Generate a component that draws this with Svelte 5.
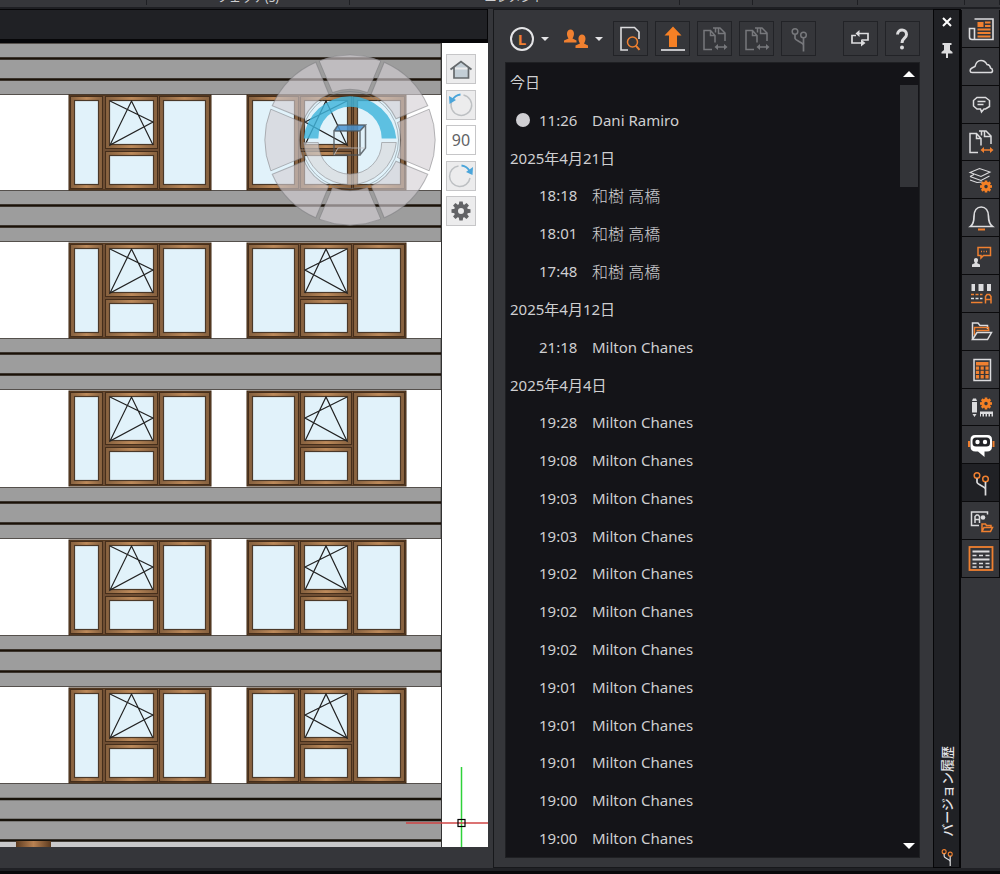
<script>
    const menuCells = ["", "フェッチ(S)", "エレメント", "", "", "", ""];

    const bands = [43, 190, 338, 487, 635];
    const windowTops = [94, 242, 390, 539, 687];
    const segments = [0, 45, 90, 135, 180, 225, 270, 315];

    const toolGroups = [
        [
            { icon: "search", label: "プレビュー" },
            { icon: "upload", label: "アップロード" },
            { icon: "files", label: "比較", disabled: true },
            { icon: "files", label: "前と比較", disabled: true },
            { icon: "branch", label: "ブランチ", disabled: true }
        ], [
            { icon: "swap", label: "更新" },
            { icon: "help", label: "ヘルプ" }
        ]
    ];

    const railItems = [
        "news", "cloud", "chat", "files", "layers", "bell", "comment", "text",
        "folder", "calc", "tools", "robot", "branch", "attach", "table"
    ];
    let activeRail = "branch";

    const versions = [
        { date: "今日" },
        { time: "11:26", name: "Dani Ramiro", current: true },
        { date: "2025年4月21日" },
        { time: "18:18", name: "和樹 高橋", ja: true },
        { time: "18:01", name: "和樹 高橋", ja: true },
        { time: "17:48", name: "和樹 高橋", ja: true },
        { date: "2025年4月12日" },
        { time: "21:18", name: "Milton Chanes" },
        { date: "2025年4月4日" },
        ...[
            "19:28", "19:08", "19:03", "19:03", "19:02", "19:02", "19:02",
            "19:01", "19:01", "19:01", "19:00", "19:00"
        ].map((time) => ({ time, name: "Milton Chanes" }))
    ];
</script>

{#snippet gear(x, y, r)}
    <g transform="translate({x} {y})" stroke="none">
        <circle r={r - 1.8} fill="none" stroke="#f58025" stroke-width="3" />
        {#each segments as angle}
            <rect x="-1.3" y={-r - 1} width="2.6" height="2.6" fill="#f58025" transform="rotate({angle})" />
        {/each}
    </g>
{/snippet}

{#snippet icon(name, muted)}
    <svg class="icon" viewBox="0 0 28 28" fill="none" stroke={muted ? "#77787c" : "#dcdcde"} stroke-width="1.5" aria-hidden="true">
        {#if name === "search"}
            <path d="M11 25H4V2.5h13.5l4.5 4.500V14" stroke-width="1.6" />
            <g stroke="#f08030"><circle cx="15.500" cy="17" r="5" /><path d="M19 20.800l3.500 4" stroke-width="2" /></g>
        {:else if name === "upload"}
            <path d="M14 1.500l8.500 9H18V22h-8V10.500H5.500z" fill="#f58025" stroke="none" />
            <path d="M2 25h24" stroke-width="1.700" />
        {:else if name === "files"}
            <path d="M11 24.500H3V5.500h6.500l4.500 5v7M9.500 5.500v5H14M12 3h7l5 5v8M17.500 3v5.500H24M14.500 3.500v4" />
            <g stroke={muted ? "#77787c" : "#f08030"} fill={muted ? "#77787c" : "#f08030"}>
                <path d="M16 22h8" /><path d="M13.500 22l3.500-3v6zM26.500 22l-3.500-3v6z" stroke="none" />
            </g>
        {:else if name === "branch"}
            <g stroke={muted ? "#77787c" : "#f08030"}><circle cx="10" cy="6.500" r="2.800" /><circle cx="18.500" cy="10" r="2.800" /></g>
            <path d="M10 9.500v3.500c0 3 8.500 4 8.500 7.500M18.500 13v13.500" stroke-width="1.700" />
        {:else if name === "swap"}
            <path d="M10 8.500h11v6.500h-6.500M9 10.500H5V18h11" stroke-width="1.700" />
            <path d="M12.500 5v7L8.500 8.500zM14 14.500v7l4.500-3.500z" fill="#dcdcde" stroke="none" />
        {:else if name === "help"}
            <path d="M8.500 9.500c.3-6 9-6 9 0 0 4-4.500 3.500-4.500 8.500" stroke-width="3" />
            <circle cx="13" cy="22.500" r="2" fill="#dcdcde" stroke="none" />
        {:else if name === "news"}
            <path d="M7.500 5H26v20.500H5q-2.500 0-2.500-2.500v-8.500h5V25" stroke-width="1.600" />
            <rect x="10.500" y="8" width="6" height="5" fill="#f08030" stroke="none" />
            <path d="M18 8.500h5.500M18 12h5.500M10.500 15.500h13M10.500 19h13M10.500 22.500h13" stroke="#f08030" stroke-width="1.800" />
        {:else if name === "cloud"}
            <path d="M5 20.500c-2 0-3-3 0-4.500l3-1.500C9 10 11 8.500 14 8.500c3.500 0 5 2 6 4 2.500.2 3.200 1 3.500 3.500 3 1 2.500 4.500 0 4.500z" />
        {:else if name === "chat"}
            <path d="M10 7.500h8.500l4 3v6l-4 2.500H17l-2.500 3-1-3H10l-3.500-3v-5.500zM10.500 11.500h8M10.500 14.500h6" />
        {:else if name === "layers"}
            <path d="M3 6.500l9.500-4L23 6l-9 4.500zM3 10.500l11 4L22.500 10M3 10.500l4-2M3 14l7 2.500 5-.5" stroke-width="1.100" />
            {@render gear(19, 20.5, 5)}
        {:else if name === "bell"}
            <path d="M3.500 22.500c2.500-2 3.500-4 3.500-10C7 6.500 10 3 14.200 3s7.300 3.500 7.300 9.500c0 6 1.500 8 4 10z" stroke-width="1.700" />
            <path d="M11 25.500h7" stroke="#f08030" stroke-width="2" />
        {:else if name === "comment"}
            <path d="M11 5.500h12.500v8h-7L14 16v-2.500h-3z" stroke="#f08030" />
            <path d="M14 9.500h7" stroke="#f08030" stroke-dasharray="1 1.500" />
            <path d="M5 25v-2.500l3-1.500c-1.500-2-1.500-5 1-5s2.500 3 1 5l3 1.500V25z" fill="#dcdcde" stroke="none" />
        {:else if name === "text"}
            <path d="M4.500 5h3.500v7H4.500zM11.500 5h5v7h-5zM20 5h4v7h-4z" fill="#dcdcde" stroke="none" />
            <path d="M4 15.500h11.500" stroke="#f08030" stroke-dasharray="3 1.500" />
            <path d="M4 19.500h11.500" stroke-dasharray="3 1.500" />
            <path d="M4 23.500h11.500M18.500 24.500v-7l1.500-2h2.500l1.500 2v7M18.500 20.500H24" stroke="#f08030" />
        {:else if name === "folder"}
            <path d="M5.500 22.500V6h5.500l2 2.500h7.500V12" />
            <path d="M7.500 18v-7.500h14v3M9.500 13.500h13" stroke="#f08030" />
            <path d="M5.500 22.500l4.500-7h14.500l-4 7z" />
        {:else if name === "calc"}
            <rect x="7" y="4.500" width="16.500" height="21" />
            <path d="M9 7h12.500v3.500H9z" fill="#f08030" stroke="none" />
            <path d="M10.500 11.500v12.500M15.200 11.500v12.500M20 11.500v12.500" stroke="#f08030" stroke-width="3.200" stroke-dasharray="3.300 1" />
        {:else if name === "tools"}
            <path d="M5 8l1-2.500h3L10 8zM5 9h5v10.500H5zM5.500 21h4l-2 3z" fill="#dcdcde" stroke="none" />
            {@render gear(19, 10.5, 5)}
            <path d="M13 18.500h13v5h-1.500v-2.500H23v2.500h-1.500v-2.500H20v2.500h-1.500v-2.500H17v2.500h-1.500v-2.500H14v2.500h-1z" fill="#dcdcde" stroke="none" />
        {:else if name === "robot"}
            <path d="M2 10v6M26.500 10v6" stroke="#f08030" stroke-width="2" />
            <path d="M8 4h12.500q4.500 0 4.500 4.500v7q0 5-5 5h-2.500V26L11 20.500H8.500q-5 0-5-5v-7Q3.500 4 8 4z" fill="#fff" stroke="none" />
            <rect x="5.500" y="6.500" width="17.500" height="9" rx="3.500" fill="#222327" stroke="none" />
            <circle cx="10.500" cy="11" r="2.200" fill="#fff" stroke="none" /><circle cx="18" cy="11" r="2.200" fill="#fff" stroke="none" />
        {:else if name === "attach"}
            <path d="M12 18.500H4.500V5H20.500v2.500M8 16V9.500L9.500 8H11l1.500 1.500V16M8 12.500h4.500" />
            <circle cx="16" cy="10.500" r="2.300" fill="#dcdcde" stroke="none" />
            <path d="M15 24.500V17h3.500l1 1.500H24v2M15 24.500l2-4h8.500l-2 4z" stroke="#f08030" />
        {:else if name === "table"}
            <rect x="2.500" y="3" width="23" height="23" stroke="#f08030" stroke-width="1.800" />
            <path d="M5.500 7.500h17M5.500 15.500h17" stroke-width="2.200" />
            <path d="M5.500 11.500h17M5.500 19.500h17M5.500 23h17" stroke-dasharray="4 2.500" />
        {/if}
    </svg>
{/snippet}

{#snippet sash(x, y, w, h)}
    <rect {x} {y} width={w} height={h} fill="url(#wood)" stroke="#452e1b" />
    <rect x={x + 4} y={y + 4} width={w - 8} height={h - 8} fill="#e1f2fa" stroke="#4a3828" stroke-width="1.2" />
{/snippet}

<div class="app">
    <header class="menubar">
        {#each menuCells as cell}
            <span>{cell}</span>
        {/each}
    </header>

    <div class="workspace">
        <main>
            <div class="tabs"></div>
            <div class="canvas">
                <svg class="drawing" viewBox="0 43 488 804" preserveAspectRatio="xMaxYMin slice" role="img" aria-label="立面図">
                    <defs>
                        <linearGradient id="wood" x1="0" x2="1">
                            <stop offset="0" stop-color="#85603e" />
                            <stop offset=".5" stop-color="#bd8a5a" />
                            <stop offset="1" stop-color="#85603e" />
                        </linearGradient>
                        <linearGradient id="post" x1="0" x2="1">
                            <stop offset="0" stop-color="#5c3b20" />
                            <stop offset=".5" stop-color="#b98252" />
                            <stop offset="1" stop-color="#5c3b20" />
                        </linearGradient>
                    </defs>
                    <rect y="43" width="488" height="804" fill="#fff" />
                    {#each bands as y}
                        <rect x="-2" y={y + 0.5} width="443" height="51" fill="#9d9d9d" stroke="#55504c" />
                        <path d="M0 {y + 15.5}h441M0 {y + 36.5}h441" stroke="#1b1208" stroke-width="2.4" />
                    {/each}
                    <rect y="783" width="441" height="58" fill="#9d9d9d" />
                    <rect y="841" width="441" height="6" fill="#c9c9cb" />
                    <path d="M0 783.5h441" stroke="#55504c" />
                    <path d="M0 799h441M0 820h441M0 840.500h441" stroke="#17120a" stroke-width="2.4" />
                    <rect x="16" y="841" width="35" height="6" fill="url(#post)" />
                    <path d="M441.500 43v804" stroke="#333" />

                    {#each windowTops as y}
                        <g transform="translate(0 {y})">
                            <rect x="69" y="1" width="142" height="95" fill="#6f4e33" stroke="#38230f" />
                            {@render sash(70.5, 2.5, 32, 92)}
                            {@render sash(105.5, 2.5, 52, 52)}
                            {@render sash(105.5, 57.5, 52, 37)}
                            {@render sash(159.5, 2.5, 50, 92)}
                            <path d="M110 7l43 21-43 23 21.500-44L153 51" fill="none" stroke="#222" stroke-width="1.200" />

                            <rect x="247" y="1" width="159" height="95" fill="#6f4e33" stroke="#38230f" />
                            {@render sash(248.5, 2.5, 50, 92)}
                            {@render sash(300.5, 2.5, 51, 52)}
                            {@render sash(300.5, 57.5, 51, 37)}
                            {@render sash(353.5, 2.5, 51, 92)}
                            <path d="M347 7l-42 21 42 23-21-44-21 44" fill="none" stroke="#222" stroke-width="1.200" />
                        </g>
                    {/each}

                    <!-- view wheel -->
                    <g transform="translate(350 140)">
                        {#each segments as angle}
                            <path d="M-30.800-79.200A85 85 0 0 1 30.800-79.200L17.500-47.500A50.600 50.600 0 0 0-17.500-47.500z" fill="#d3ced3" fill-opacity=".62" stroke="#77777b" stroke-opacity=".5" transform="rotate({angle})" />
                        {/each}
                        <circle r="48.500" fill="none" stroke="#6b7880" stroke-opacity=".5" stroke-width="1" />
                        <path d="M-46.300-1.500a46.500 46.500 0 0 1 92.600 0h-14.600a31.700 31.700 0 0 0-63.400 0z" fill="#3fb5dc" fill-opacity=".82" />
                        <path d="M-46.300 2.500a46.500 46.500 0 0 0 92.600 0h-14.600a31.700 31.700 0 0 1-63.400 0z" fill="#d8d8dc" fill-opacity=".65" stroke="#8a8a8e" stroke-opacity=".6" />
                        <path d="M-16-9l4-6h27.500l-5.500 6z" fill="#4a93d0" fill-opacity=".85" />
                        <path d="M-16-9h26v24h-26zM-16-9l4-6h27.500l-5.500 6M15.500-15v23L10 15" fill="none" stroke="#4c5358" stroke-opacity=".8" stroke-width="1.500" />
                        <path d="M-12 8h27M-12 8l-4 7" fill="none" stroke="#c0c0c4" stroke-opacity=".8" />
                    </g>

                    <path d="M461.500 767v80" stroke="#2fd23a" stroke-width="1.500" />
                    <path d="M406 823h82" stroke="#cf4545" stroke-width="1.500" />
                    <rect x="458" y="819.500" width="7" height="7" fill="none" stroke="#000" stroke-width="1.200" />
                </svg>

                <div class="view-tools">
                    <button aria-label="ホーム">
                        <svg viewBox="0 0 28 28" aria-hidden="true"><path d="M3.500 14.500L14 6.500l10.500 8M7 12.500V23h14.500V12.500" fill="#c3ced6" stroke="#65696c" stroke-width="1.700" /></svg>
                    </button>
                    <button aria-label="左に回転">
                        <svg viewBox="0 0 28 28" aria-hidden="true"><path d="M16.500 4A10.300 10.300 0 1 1 4.500 11" fill="none" stroke="#bdc0c3" stroke-width="1.500" /><path d="M13.500 3.500C10 4 7 6 5.500 9" fill="none" stroke="#4aa5da" stroke-width="1.800" /><path d="M2 5l.5 8 6.500-4z" fill="#4aa5da" /></svg>
                    </button>
                    <button class="angle" aria-label="回転角度 90">90</button>
                    <button aria-label="右に回転">
                        <svg viewBox="0 0 28 28" aria-hidden="true"><path d="M11.500 4A10.300 10.300 0 1 0 23 16" fill="none" stroke="#bdc0c3" stroke-width="1.500" /><path d="M14.500 3.500C18 4 21 6 22.500 9" fill="none" stroke="#4aa5da" stroke-width="1.800" /><path d="M26 5l-.5 8-6.500-3z" fill="#4aa5da" /></svg>
                    </button>
                    <button aria-label="設定">
                        <svg viewBox="-14 -14 28 28" aria-hidden="true">
                            <circle r="5" fill="none" stroke="#626366" stroke-width="4" />
                            {#each segments as angle}
                                <path d="M-2.200-6l.5-3.500h3.400l.5 3.500z" fill="#626366" transform="rotate({angle})" />
                            {/each}
                        </svg>
                    </button>
                </div>
            </div>
            <div class="canvas-foot"></div>
        </main>

        <section class="panel" aria-label="バージョン履歴">
            <div class="toolbar">
                <button class="menu" aria-label="ユーザー L">
                    <span class="avatar">L</span><span class="caret"></span>
                </button>
                <button class="menu" aria-label="共有">
                    <svg class="people" viewBox="0 0 24 24" fill="#f08030" aria-hidden="true">
                        <path d="M0 15.500v-2l4.500-2C2 8 2.500 2.500 6.500 2.500s4.500 5.500 2 9l4 2v2z" />
                        <path d="M11.500 21v-2.500l4.500-2c-2.500-3.500-2-9 2-9s4.500 5.500 2 9l4 2V21z" />
                    </svg>
                    <span class="caret"></span>
                </button>
                {#each toolGroups as group}
                    <div class="group">
                        {#each group as tool}
                            <button class="tool" disabled={tool.disabled} aria-label={tool.label}>
                                {@render icon(tool.icon, tool.disabled)}
                            </button>
                        {/each}
                    </div>
                {/each}
            </div>

            <div class="history">
                <ul>
                    {#each versions as version}
                        {#if version.date}
                            <li class="date">{version.date}</li>
                        {:else}
                            <li class="entry">
                                <span class:dot={version.current}></span>
                                <time>{version.time}</time>
                                <span class:ja={version.ja}>{version.name}</span>
                            </li>
                        {/if}
                    {/each}
                </ul>
                <div class="scroll">
                    <button class="up" aria-label="上へ"></button>
                    <div class="track"><div class="thumb"></div></div>
                    <button class="down" aria-label="下へ"></button>
                </div>
            </div>
        </section>

        <aside class="strip">
            <button aria-label="閉じる">
                <svg viewBox="0 0 18 18" aria-hidden="true"><path d="M5 5l8 8M13 5l-8 8" stroke="#fff" stroke-width="2" /></svg>
            </button>
            <button aria-label="ピン留め">
                <svg viewBox="0 0 18 18" aria-hidden="true"><path d="M4.500 2h9v2H12v5l2.500 2v1.500h-4.500V17H8v-4.500H3.500V11L6 9V4H4.500z" fill="#dcdcde" /></svg>
            </button>
            <h2>バージョン履歴</h2>
            {@render icon("branch", false)}
        </aside>

        <nav class="rail">
            <div class="rail-items">
                {#each railItems as item}
                    <button class:active={activeRail === item} aria-label={item} on:click={() => activeRail = item}>
                        {@render icon(item, false)}
                    </button>
                {/each}
            </div>
        </nav>
    </div>
    <footer></footer>
</div>

<style>
    :global(body) {
        background: #35363a;
    }

    button {
        padding: 0;
        border: none;
        background: none;
        color: inherit;
        font: inherit;
        cursor: pointer;
    }

    .app {
        display: flex;
        flex-direction: column;
        height: 100vh;
        color: #cfcfd1;
        background: #35363a;
        font-family: "Noto Sans", "Noto Sans CJK JP", sans-serif;
        font-size: 15px;
    }

    .menubar {
        display: grid;
        grid-template-columns: 147fr 203fr 330fr 73fr 105fr 107fr 35fr;
        height: 7px;
        overflow: hidden;
        border-bottom: 2px solid #1e1f23;
    }

    .menubar span {
        display: flex;
        align-items: flex-end;
        justify-content: center;
        height: 5px;
        border-right: 1px solid #1e1f23;
        font-size: 12px;
        line-height: 14px;
        white-space: nowrap;
    }

    .workspace {
        flex: 1;
        min-height: 0;
        display: grid;
        grid-template-columns: 1fr 440px 28px 39px;
        grid-template-rows: minmax(0, 1fr);
    }

    main {
        display: flex;
        flex-direction: column;
        min-width: 0;
        padding-right: 5px;
    }

    .tabs {
        height: 29px;
        background: #202125;
        border: 1px solid #060608;
        border-left: none;
        border-bottom-width: 4px;
    }

    .canvas {
        flex: 1;
        min-height: 0;
        position: relative;
    }

    .drawing {
        display: block;
        width: 100%;
        height: 100%;
    }

    .canvas-foot {
        height: 21px;
    }

    .view-tools {
        position: absolute;
        top: 11px;
        right: 12px;
        height: 172px;
        display: flex;
        flex-direction: column;
        justify-content: space-between;
    }

    .view-tools button {
        width: 30px;
        height: 30px;
        border: 1px solid #c6c6c8;
        background: #ececed;
    }

    .view-tools svg {
        display: block;
        width: 28px;
        height: 28px;
    }

    .view-tools .angle {
        background: #fff;
        color: #626366;
        font-size: 16px;
    }

    .panel {
        display: flex;
        flex-direction: column;
        gap: 6px;
        padding: 11px 13px 9px 11px;
        border: 1px solid #17181b;
        border-right: none;
    }

    .toolbar, .group {
        display: flex;
        align-items: center;
        gap: 7px;
    }

    .group:last-child {
        margin-left: auto;
    }

    .menu {
        width: 47px;
        height: 35px;
        display: flex;
        align-items: center;
        gap: 7px;
        padding-left: 5px;
    }

    .avatar {
        box-sizing: border-box;
        width: 24px;
        height: 24px;
        border: 2px solid #e4e4e6;
        border-radius: 50%;
        color: #f08030;
        font-size: 15px;
        font-weight: 700;
        line-height: 20px;
    }

    .people {
        width: 24px;
        height: 24px;
    }

    .caret {
        border: 4px solid transparent;
        border-top-color: #e4e4e6;
        border-bottom: none;
    }

    .tool {
        width: 35px;
        height: 35px;
        display: grid;
        place-items: center;
        border: 1px solid #222327;
    }

    .icon {
        display: block;
        width: 28px;
        height: 28px;
    }

    .history {
        flex: 1;
        min-height: 0;
        display: flex;
        background: #141418;
        border: 1px solid #1f2023;
    }

    ul {
        flex: 1;
        min-height: 0;
        display: grid;
        grid-auto-rows: minmax(0, 1fr);
        margin: 0;
        padding: 0;
        list-style: none;
    }

    li {
        display: flex;
        align-items: center;
        white-space: nowrap;
    }

    .date {
        padding-left: 4px;
    }

    .entry {
        display: grid;
        grid-template-columns: 33px 53px 1fr;
    }

    .dot {
        width: 14px;
        height: 14px;
        margin-left: 10px;
        border-radius: 50%;
        background: #d0cfd3;
    }

    .ja {
        font-size: 16px;
        font-weight: 300;
    }

    .scroll {
        width: 18px;
        margin-right: 1px;
        display: flex;
        flex-direction: column;
    }

    .scroll button {
        height: 22px;
        display: grid;
        place-items: center;
    }

    .scroll button::before {
        content: "";
        border: 6px solid transparent;
    }

    .scroll .up::before {
        border-top: none;
        border-bottom-color: #fff;
    }

    .scroll .down::before {
        border-bottom: none;
        border-top-color: #fff;
    }

    .track {
        flex: 1;
    }

    .thumb {
        height: 102px;
        background: #333438;
    }

    .strip {
        display: flex;
        flex-direction: column;
        align-items: center;
        gap: 10px;
        padding-top: 3px;
        background: #202125;
        border: 1px solid #060608;
        border-right-width: 2px;
    }

    .strip button, .strip button svg {
        display: block;
        width: 18px;
        height: 18px;
    }

    .strip h2 {
        margin: auto 0 0;
        color: #e4e4e6;
        font-size: 13px;
        font-weight: 500;
        line-height: 18px;
        white-space: nowrap;
        writing-mode: vertical-rl;
        text-orientation: sideways;
        transform: rotate(180deg);
    }

    .strip .icon {
        width: 20px;
        height: 20px;
    }

    .rail-items {
        height: 568px;
        padding-top: 1px;
        display: flex;
        flex-direction: column;
    }

    .rail button {
        flex: 1;
        display: grid;
        place-items: center;
        border: 1px solid #0b0b0d;
        border-top: none;
    }

    .rail .active {
        background: #202125;
    }

    footer {
        height: 3px;
        background: #202125;
        border-bottom: 3px solid #08080a;
    }
</style>
